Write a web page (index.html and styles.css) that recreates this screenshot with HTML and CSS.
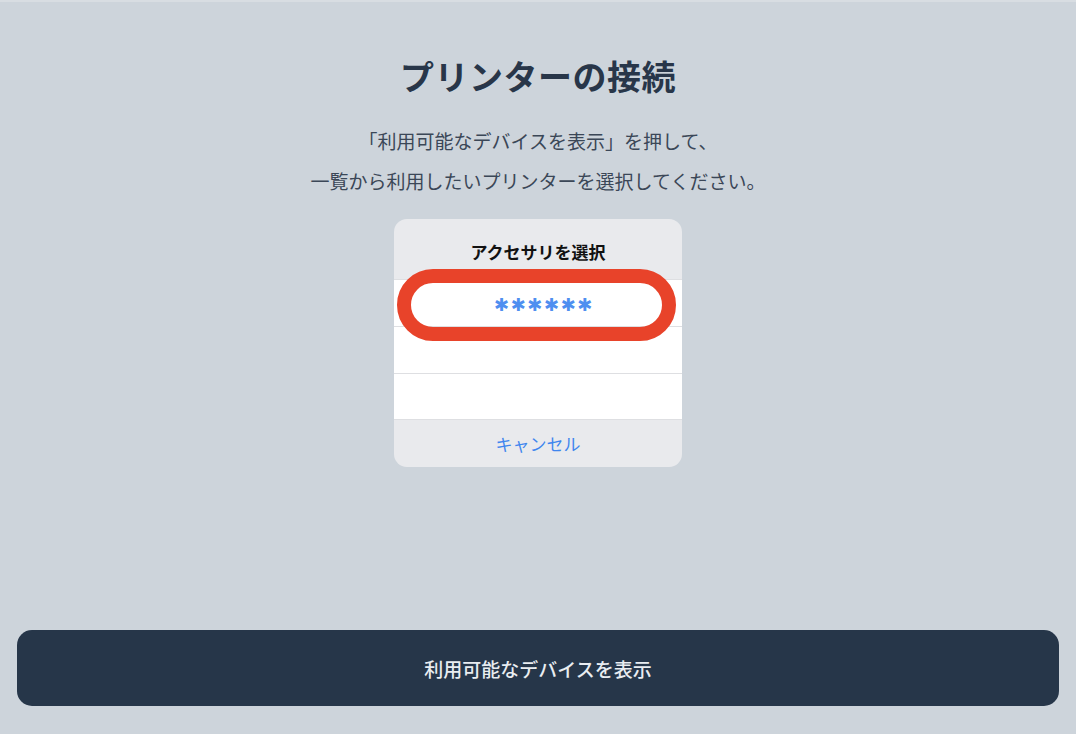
FILE: index.html
```html
<!DOCTYPE html>
<html lang="ja">
<head>
<meta charset="utf-8">
<title>プリンターの接続</title>
<link rel="stylesheet" href="styles.css">
</head>
<body>
<div class="page">
  <h1 class="title">プリンターの接続</h1>
  <p class="desc">「利用可能なデバイスを表示」を押して、<br>一覧から利用したいプリンターを選択してください。</p>
  <div class="sheet">
    <div class="sheet-head">アクセサリを選択</div>
    <div class="sheet-row device">✱✱✱✱✱✱</div>
    <div class="sheet-row"></div>
    <div class="sheet-row short"></div>
    <div class="sheet-cancel">キャンセル</div>
    <div class="highlight"></div>
  </div>
  <button class="show-btn">利用可能なデバイスを表示</button>
</div>
</body>
</html>
```
FILE: styles.css
```css
* { box-sizing: border-box; }
html, body {
  margin: 0;
  padding: 0;
  background: #cdd4db;
}
body {
  font-family: "Noto Sans CJK JP", "Noto Sans", sans-serif;
  border-top: 2px solid #d8dde2;
}
.page {
  height: 732px;
  display: flex;
  flex-direction: column;
  align-items: center;
}
.title {
  margin: 54px 0 0;
  font-size: 34px;
  line-height: 40px;
  font-weight: 700;
  color: #283649;
  letter-spacing: 0.5px;
}
.desc {
  margin: 25px 0 0;
  font-size: 19px;
  line-height: 40px;
  color: #3b4757;
  text-align: center;
}
.sheet {
  position: relative;
  margin-top: 18px;
  width: 288px;
  height: 248px;
  border-radius: 13px;
  background: #e9eaed;
  display: flex;
  flex-direction: column;
}
.sheet-head {
  height: 60px;
  display: flex;
  align-items: center;
  justify-content: center;
  font-size: 17px;
  font-weight: 700;
  color: #111;
  padding-top: 4px;
}
.sheet-row {
  height: 47px;
  background: #fff;
  border-top: 1px solid #dedfe2;
}
.sheet-row.short { height: 46px; }
.device {
  display: flex;
  align-items: center;
  justify-content: center;
  color: #4f8ff0;
  font-family: "DejaVu Sans", sans-serif;
  font-size: 18px;
  letter-spacing: 1.6px;
  padding: 4px 0 0 12px;
  line-height: 1;
}
.sheet-cancel {
  height: 48px;
  border-top: 1px solid #dedfe2;
  display: flex;
  align-items: center;
  justify-content: center;
  font-size: 17px;
  color: #3f86ee;
  border-radius: 0 0 13px 13px;
}
.highlight {
  position: absolute;
  left: 3px;
  top: 50px;
  width: 279px;
  height: 72px;
  border: 14px solid #e8432a;
  border-radius: 36px;
}
.show-btn {
  margin: auto 0 28px;
  width: 1042px;
  height: 76px;
  border: none;
  border-radius: 15px;
  background: #263649;
  color: #e9edf1;
  font-family: "Noto Sans CJK JP", "Noto Sans", sans-serif;
  font-size: 19px;
  font-weight: 500;
}
```
